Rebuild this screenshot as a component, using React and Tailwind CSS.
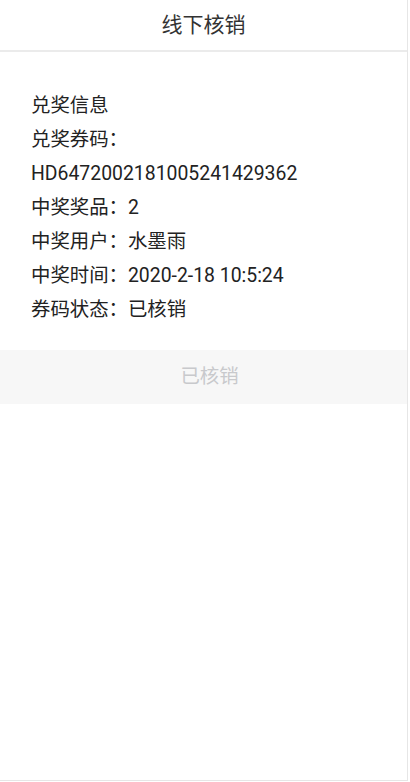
import React from "react";

const rows = [
  "兑奖信息",
  "兑奖券码：",
  "HD6472002181005241429362",
  "中奖奖品：2",
  "中奖用户：水墨雨",
  "中奖时间：2020-2-18 10:5:24",
  "券码状态：已核销",
];

export default function App() {
  return (
    <div
      className="w-[408px] h-[781px] bg-white border-r border-b border-[#e6e6e6] text-[#222]"
      style={{ fontFamily: 'Roboto, "Noto Sans CJK SC", sans-serif' }}
    >
      <header className="h-[52px] flex items-center justify-center border-b-2 border-[#ebebeb]">
        <h1 className="text-[21px] leading-none text-[#333]">线下核销</h1>
      </header>

      <section className="pt-[37px] px-[31px]">
        {rows.map((r, i) => (
          <div key={i} className="text-[19.4px] leading-[34px]">{r}</div>
        ))}
      </section>

      <div className="mt-[23px] h-[54px] pl-[12px] bg-[#f7f7f7] flex items-center justify-center text-[19.4px] text-[#c8c9cc]">
        已核销
      </div>
    </div>
  );
}
